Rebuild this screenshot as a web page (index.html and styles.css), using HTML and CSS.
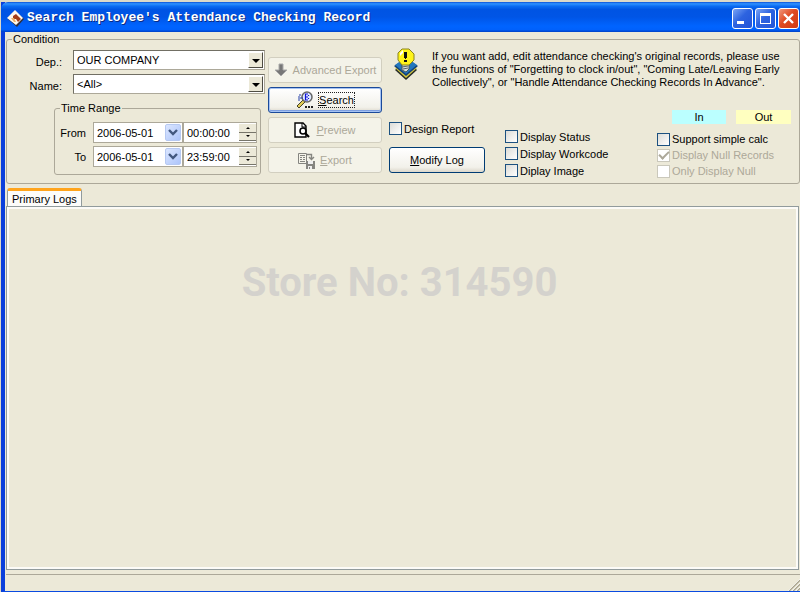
FILE: index.html
```html
<!DOCTYPE html>
<html lang="en">
<head>
<meta charset="utf-8">
<title>Search Employee's Attendance Checking Record</title>
<link rel="stylesheet" href="styles.css">
</head>
<body>
<div class="window">
  <header class="titlebar">
    <svg class="app-icon" width="18" height="18" viewBox="0 0 18 18" aria-hidden="true">
      <path d="M8 2L17 10L10 18L1 10Z" fill="#32313d"/>
      <path d="M8 1L16 9L9 16L0 9Z" fill="#fff8eb"/>
      <path d="M6 7L9 5L12 8L14 10L11 13L9 10L6 10Z" fill="#a33c17"/>
      <path d="M4 9L7 9L9 13L7 13Z" fill="#eeb166"/>
    </svg>
    <h1 class="title">Search Employee's Attendance Checking Record</h1>
    <div class="window-buttons">
      <button class="win-button" type="button" aria-label="Minimize"><svg width="19" height="19" viewBox="0 0 19 19"><path d="M4 12h7v3H4z" fill="#fff"/></svg></button>
      <button class="win-button" type="button" aria-label="Maximize"><svg width="19" height="19" viewBox="0 0 19 19"><path d="M4 4h11v11H4zM5 7v7h9V7z" fill="#fff" fill-rule="evenodd"/></svg></button>
      <button class="win-button win-close" type="button" aria-label="Close"><svg width="19" height="19" viewBox="0 0 19 19"><path d="M5 5l9 9M14 5l-9 9" stroke="#fff" stroke-width="2.4"/></svg></button>
    </div>
  </header>

  <main class="client">
    <fieldset class="group condition">
      <legend>Condition</legend>
      <div class="condition-body">
        <div class="filters">
          <div class="field">
            <label for="dep">Dep.:</label>
            <div class="combo"><select id="dep"><option>OUR COMPANY</option></select><span class="combo-arrow"></span></div>
          </div>
          <div class="field">
            <label for="name">Name:</label>
            <div class="combo"><select id="name"><option>&lt;All&gt;</option></select><span class="combo-arrow"></span></div>
          </div>
          <fieldset class="group time-range">
            <legend>Time Range</legend>
            <div class="range-rows">
              <div class="range-row">
                <label for="from-date">From</label>
                <div class="date-box"><input id="from-date" type="text" value="2006-05-01"><button class="date-drop" type="button" aria-label="Choose start date"><svg width="10" height="8" viewBox="0 0 10 8"><path d="M1 1l4 4 4-4" fill="none" stroke="#42587f" stroke-width="2.4"/></svg></button></div>
                <div class="time-box"><input type="text" value="00:00:00" aria-label="Start time"><div class="spin"><button class="spin-up" type="button" aria-label="Later"></button><button class="spin-down" type="button" aria-label="Earlier"></button></div></div>
              </div>
              <div class="range-row">
                <label for="to-date">To</label>
                <div class="date-box"><input id="to-date" type="text" value="2006-05-01"><button class="date-drop" type="button" aria-label="Choose end date"><svg width="10" height="8" viewBox="0 0 10 8"><path d="M1 1l4 4 4-4" fill="none" stroke="#42587f" stroke-width="2.4"/></svg></button></div>
                <div class="time-box"><input type="text" value="23:59:00" aria-label="End time"><div class="spin"><button class="spin-up" type="button" aria-label="Later"></button><button class="spin-down" type="button" aria-label="Earlier"></button></div></div>
              </div>
            </div>
          </fieldset>
        </div>

        <div class="actions">
          <button class="button" type="button" disabled>
            <svg width="14" height="14" viewBox="0 0 14 14"><path d="M5 1h4v6h4L7 13 1 7h4z" fill="#777" stroke="#aaa"/></svg>
            <span>Advanced Export</span>
          </button>
          <button class="button button-default" type="button">
            <svg width="18" height="18" viewBox="0 0 18 18">
              <path d="M1 15L7 9L9 11L3 17Z" fill="#e0cb55" stroke="#45422b"/>
              <circle cx="11" cy="6" r="5" fill="#dfeaff" stroke="#666" stroke-width="1.5"/>
              <path d="M9 3h3M9.500 3v6M9 6h3M9 9h3M12.500 4v1M12.500 7v1" stroke="#1010d8" stroke-width="1.2"/>
              <path d="M3 5v5M3 4h2M4 7h3" stroke="#233fa8"/>
              <path d="M9 15h2v2H9zM12 15h2v2h-2zM15 15h2v2h-2z" fill="#222"/>
            </svg>
            <span class="focus"><u>S</u>earch</span>
          </button>
          <button class="button" type="button" disabled>
            <svg width="17" height="16" viewBox="0 0 17 16">
              <path d="M1 1h8l3 3v11H1z" fill="#fff" stroke="#000" stroke-width="1.4"/>
              <path d="M8 1v4h4" fill="none" stroke="#000"/>
              <circle cx="9" cy="9" r="3" fill="#fff" stroke="#000" stroke-width="1.6"/>
              <path d="M11 11l4 4" stroke="#000" stroke-width="2.2"/>
            </svg>
            <span><u>P</u>review</span>
          </button>
          <button class="button" type="button" disabled>
            <svg width="17" height="17" viewBox="0 0 17 17">
              <path d="M.5 1.500h8v10h-8z" fill="#f5f4ea" stroke="#858580"/>
              <path d="M2 3.500h5M2 5.500h2M5 5.500h2M2 7.500h2M5 7.500h2M2 9.500h5" stroke="#858580"/>
              <path d="M9 2.500h4.500v4M11 5l2.500 2.500L16 5" fill="none" stroke="#858580" stroke-width="1.4"/>
              <path d="M8 9h9v8H8z" fill="#858580"/>
              <path d="M10 9h5v3h-5zM10 14h4v3h-4z" fill="#eee"/><path d="M11 15h1v2h-1z" fill="#858580"/>
            </svg>
            <span><u>E</u>xport</span>
          </button>
        </div>

        <div class="details">
          <div class="notice">
            <svg width="24" height="33" viewBox="0 0 24 33" aria-hidden="true">
              <path d="M1 22L12 12L23 22L12 32Z" fill="#252b27"/>
              <path d="M1 20L12 12L23 20L12 30Z" fill="#d6c83b"/>
              <path d="M0 18L12 10L24 18L12 28Z" fill="#123f78"/>
              <path d="M1 17L12 9L23 17L12 26Z" fill="#2377bd"/>
              <path d="M8 16h7v5l-3 3-4-2z" fill="#d7dfdc" stroke="#4c5858"/>
              <path d="M8 19l6-1M9 21l5-1" stroke="#56636a"/>
              <path d="M8 1h7l5 5v6l-5 5H8l-4-5V5z" fill="#fff41a" stroke="#8a8320"/>
              <path d="M7 4l2-2v3l-3 3V5z" fill="#fff"/>
              <path d="M10 4h3v6h-1v1h-1v-1h-1zM10 12h3v2h-3z" fill="#111"/>
            </svg>
            <p>If you want add, edit attendance checking's original records, please use<br>the functions of "Forgetting to clock in/out", "Coming Late/Leaving Early<br>Collectively", or "Handle Attendance Checking Records In Advance".</p>
          </div>
          <div class="options">
            <div class="report">
              <label class="check"><input type="checkbox">Design Report</label>
              <button class="button" type="button"><span><u>M</u>odify Log</span></button>
            </div>
            <div class="display-options">
              <label class="check"><input type="checkbox">Display Status</label>
              <label class="check"><input type="checkbox">Display Workcode</label>
              <label class="check"><input type="checkbox">Diplay Image</label>
            </div>
            <div class="record-options">
              <div class="key"><span class="key-in">In</span><span class="key-out">Out</span></div>
              <label class="check"><input type="checkbox">Support simple calc</label>
              <label class="check check-disabled"><input type="checkbox" checked disabled>Display Null Records</label>
              <label class="check check-disabled"><input type="checkbox" disabled>Only Display Null</label>
            </div>
          </div>
        </div>
      </div>
    </fieldset>

    <div class="tabs" role="tablist"><button class="tab" type="button" role="tab" aria-selected="true">Primary Logs</button></div>
    <section class="log-panel" role="tabpanel"><p class="store">Store No: 314590</p></section>
    <footer class="statusbar">
      <svg width="12" height="12" viewBox="0 0 12 12" aria-hidden="true"><path d="M1 12L12 1M5 12L12 5M9 12L12 9" stroke="#aaa58f" stroke-width="1.6"/><path d="M0 12L12 0M4 12L12 4M8 12L12 8" stroke="#fff" stroke-width=".7"/></svg>
    </footer>
  </main>
</div>
</body>
</html>
```
FILE: styles.css
```css
* { box-sizing: border-box; }

html, body { height: 100%; }

body {
  margin: 0;
  padding: 2px 0 0 1px;
  background: #ddd9c8;
  color: #000;
  font: 11px/14px "Liberation Sans", Arial, sans-serif;
  overflow: hidden;
}

button, input, select { font: inherit; color: inherit; margin: 0; }
p, h1 { margin: 0; }
svg { display: block; flex: none; }

.window {
  display: flex;
  flex-direction: column;
  height: 100%;
  border-left: 4px solid #0a3fdc;
  border-bottom: 1px solid #0a4be0;
  background: #ece9d8;
}

.titlebar {
  display: flex;
  align-items: center;
  height: 30px;
  margin-left: -4px;
  padding: 2px 0 0 6px;
  border-radius: 7px 0 0 0;
  background: linear-gradient(#0a50d8 0, #2f92ff 6%, #0b6cf2 14%, #0054e3 25%, #0055e6 50%, #0064ff 80%, #0061fc 92%, #0040c4 100%);
}

.title {
  flex: 1;
  margin-left: 2px;
  color: #fff;
  font: bold 13px/16px "Liberation Mono", monospace;
  text-shadow: 1px 1px #0b2a82;
  white-space: nowrap;
}

.window-buttons { display: flex; gap: 2px; padding-right: 1px; }

.win-button {
  width: 21px;
  height: 21px;
  padding: 0;
  border: 1px solid #fff;
  border-radius: 3px;
  background: linear-gradient(135deg, #7ba5f5, #2d63e0 45%, #2254d8);
}

.win-close { background: linear-gradient(135deg, #f0977c, #e04a22 45%, #cf3a12); }

.client { flex: 1; display: flex; flex-direction: column; min-height: 0; padding-left: 1px; }

.group { min-width: 0; margin: 0; padding: 0; border: 1px solid #aca899; border-radius: 3px; }
.group legend { padding: 0 1px; margin-left: 5px; }

.condition-body { display: flex; }

.filters { flex: none; width: 258px; padding: 4px 0 8px; }
.field { display: flex; align-items: center; gap: 11px; margin-bottom: 4px; }
.field label { width: 55px; padding-top: 4px; text-align: right; }

.combo {
  flex: 1;
  display: flex;
  position: relative;
  height: 20px;
  border: 1px solid #aca899;
  border-top-color: #716f64;
  border-left-color: #716f64;
  background: #fff;
}

.combo select { flex: 1; appearance: none; border: 0; padding: 0 18px 0 3px; background: none; outline: 0; }

.combo-arrow {
  position: absolute;
  top: 1px;
  right: 1px;
  bottom: 1px;
  width: 15px;
  border: 1px solid #fff;
  border-right-color: #4e4c43;
  border-bottom-color: #4e4c43;
  background: #ece9d8;
  pointer-events: none;
}

.combo-arrow::after {
  content: "";
  position: absolute;
  left: 3px;
  top: 6px;
  border: 4px solid transparent;
  border-top-color: #000;
  border-bottom: 0;
}

.time-range { margin: 7px 4px 0 47px; }
.range-rows { display: grid; gap: 3px; padding: 7px 3px 7px 0; }
.range-row { display: flex; align-items: center; }
.range-row label { width: 31px; margin-right: 7px; text-align: right; }

.date-box, .time-box { display: flex; height: 21px; border: 1px solid #aca899; background: #fff; }
.date-box { width: 90px; }
.time-box { flex: 1; }
.date-box input, .time-box input { flex: 1; width: 0; min-width: 0; border: 0; padding: 0 0 0 3px; background: none; outline: 0; }

.date-drop {
  display: grid;
  place-items: center;
  width: 16px;
  margin: 1px;
  padding: 0;
  border: 1px solid #b6c9f2;
  border-radius: 2px;
  background: linear-gradient(135deg, #dbe6ff, #adc5fa);
}

.spin { display: grid; grid-template-rows: 1fr 1fr; width: 17px; padding: 1px 0; }
.spin button { display: grid; place-items: center; padding: 0; border: 0; border-bottom: 1px solid #77756a; background: #ece9d8; }
.spin button::after { content: ""; border: 2px solid transparent; }
.spin .spin-up::after { border-top: 0; border-bottom-color: #000; }
.spin .spin-down::after { border-bottom: 0; border-top-color: #000; }

.actions { display: flex; flex-direction: column; gap: 4px; width: 114px; margin: 11px 7px 0 3px; }

.button {
  display: flex;
  align-items: center;
  justify-content: center;
  gap: 5px;
  height: 26px;
  padding: 0 2px;
  border: 1px solid #003c74;
  border-radius: 3px;
  background: linear-gradient(#fff, #f2f1ea 80%, #dcd7cb);
  white-space: nowrap;
}

.button:disabled { border-color: #d2cfc0; background: #f4f3e9; color: #aca899; }
.button-default { border-color: #1b4a9a; box-shadow: inset 0 0 0 1px #a6c3f3, inset 0 -2px #7e9fe0; }
.focus { outline: 1px dotted #222; }

.details { flex: 1; display: flex; flex-direction: column; justify-content: space-between; min-width: 0; padding: 2px 0 4px; }
.notice { display: flex; gap: 14px; padding-left: 5px; line-height: 13px; white-space: nowrap; }
.notice p { padding-top: 2px; }

.options { display: grid; grid-template-columns: 116px 152px 1fr; align-items: end; }
.report { width: 96px; padding-bottom: 6px; }
.report .button { width: 100%; margin-top: 10px; }

.check { display: flex; align-items: center; gap: 2px; height: 17px; white-space: nowrap; }
.record-options .check { height: 16px; }

.check input {
  appearance: none;
  flex: none;
  display: grid;
  place-items: center;
  width: 13px;
  height: 13px;
  border: 1px solid #1c5180;
  background: linear-gradient(135deg, #dcdcd7, #fff);
}

.check-disabled { color: #aca899; }
.check input:disabled { border-color: #cac8bb; background: #fff; }
.check input:checked::after { content: ""; width: 8px; height: 4px; border: solid #aca899; border-width: 0 0 2px 2px; transform: translateY(-1px) rotate(-45deg); }

.key { display: grid; grid-template-columns: 54px 55px; gap: 10px; margin: 0 0 7px 15px; text-align: center; }
.key-in { background: #bff; }
.key-out { background: #ffffc0; }

.tabs { display: flex; margin-top: 4px; padding-left: 1px; }

.tab {
  height: 18px;
  padding: 0 4px;
  border: 1px solid #919b9c;
  border-top: 3px solid #ffa41c;
  border-bottom: 0;
  border-radius: 3px 3px 0 0;
  background: #fcfcfa;
}

.log-panel {
  flex: 1;
  margin-right: 1px;
  border: 1px solid #919b9c;
  box-shadow: inset 0 0 0 2px #fcfbf7;
  text-align: center;
}

.store { padding-right: 6px; margin-top: 52px; color: #d4d2cd; font: bold 40px/48px Roboto, sans-serif; }

.statusbar { display: flex; justify-content: flex-end; align-items: flex-end; height: 17px; margin-top: 4px; border-top: 1px solid #aca899; }
```
